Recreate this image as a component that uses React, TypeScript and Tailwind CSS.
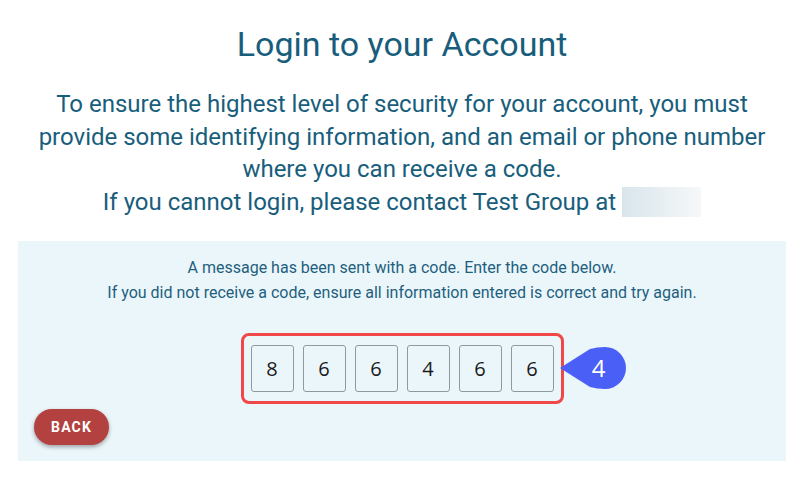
import React from 'react';

const digits = ['8', '6', '6', '4', '6', '6'];

export default function App() {
  return (
    <div className="w-[804px] h-[480px] bg-white font-['Roboto',sans-serif] text-[#185e7c] overflow-hidden">
      <div className="pt-[22px] text-center">
        <h1 className="text-[34px] leading-[44px]">Login to your Account</h1>
        <div className="mt-[22px] text-[24px] leading-[32.5px] px-[30px]">
          <p>
            To ensure the highest level of security for your account, you must provide some identifying
            information, and an email or phone number where you can receive a code.
          </p>
          <p className="flex items-center justify-center">
            <span>If you cannot login, please contact Test Group at</span>
            <span className="inline-block ml-[6px] w-[79px] h-[30px] bg-gradient-to-r from-[#d9e5ec] to-[#f6f8f9]" />
          </p>
        </div>
      </div>

      <div className="mx-[18px] mt-[23px] h-[220px] bg-[#ebf6fb] flex flex-col pt-[14px]">
        <div className="text-center text-[16px] leading-[25px] text-[#1e5f7e]">
          <p>A message has been sent with a code. Enter the code below.</p>
          <p>If you did not receive a code, ensure all information entered is correct and try again.</p>
        </div>

        <div className="mt-[28px] flex justify-center">
          <div className="relative flex gap-[9px] border-[3px] border-[#f04848] rounded-[8px] px-[7px] py-[9px]">
            {digits.map((d, i) => (
              <div
                key={i}
                className="w-[43px] h-[47px] border border-[#8f9a9f] rounded-[3px] flex items-center justify-center text-[20px] text-[#1a1a1a] font-['Open_Sans',sans-serif]"
              >
                {d}
              </div>
            ))}
            {/* step badge */}
            <div className="absolute left-[316px] top-[11px] w-[68px] h-[42px]">
              <svg width="68" height="42" viewBox="0 0 68 42" className="absolute inset-0">
                <path d="M0 21 L30 2 Q37 0 45 0 A21 21 0 0 1 45 42 Q37 42 30 40 Z" fill="#4a5ff5" />
              </svg>
              <span className="absolute left-[28px] top-0 w-[22px] h-[42px] flex items-center justify-center text-white text-[24px] font-['Open_Sans',sans-serif]">
                4
              </span>
            </div>
          </div>
        </div>

        <div className="mt-[5px] pl-[16px]">
          <button className="h-[36px] px-[17px] rounded-full bg-[#b3413f] text-white text-[14px] font-bold tracking-[1.2px] shadow-[0_2px_4px_rgba(0,0,0,0.35)]">
            BACK
          </button>
        </div>
      </div>
    </div>
  );
}
